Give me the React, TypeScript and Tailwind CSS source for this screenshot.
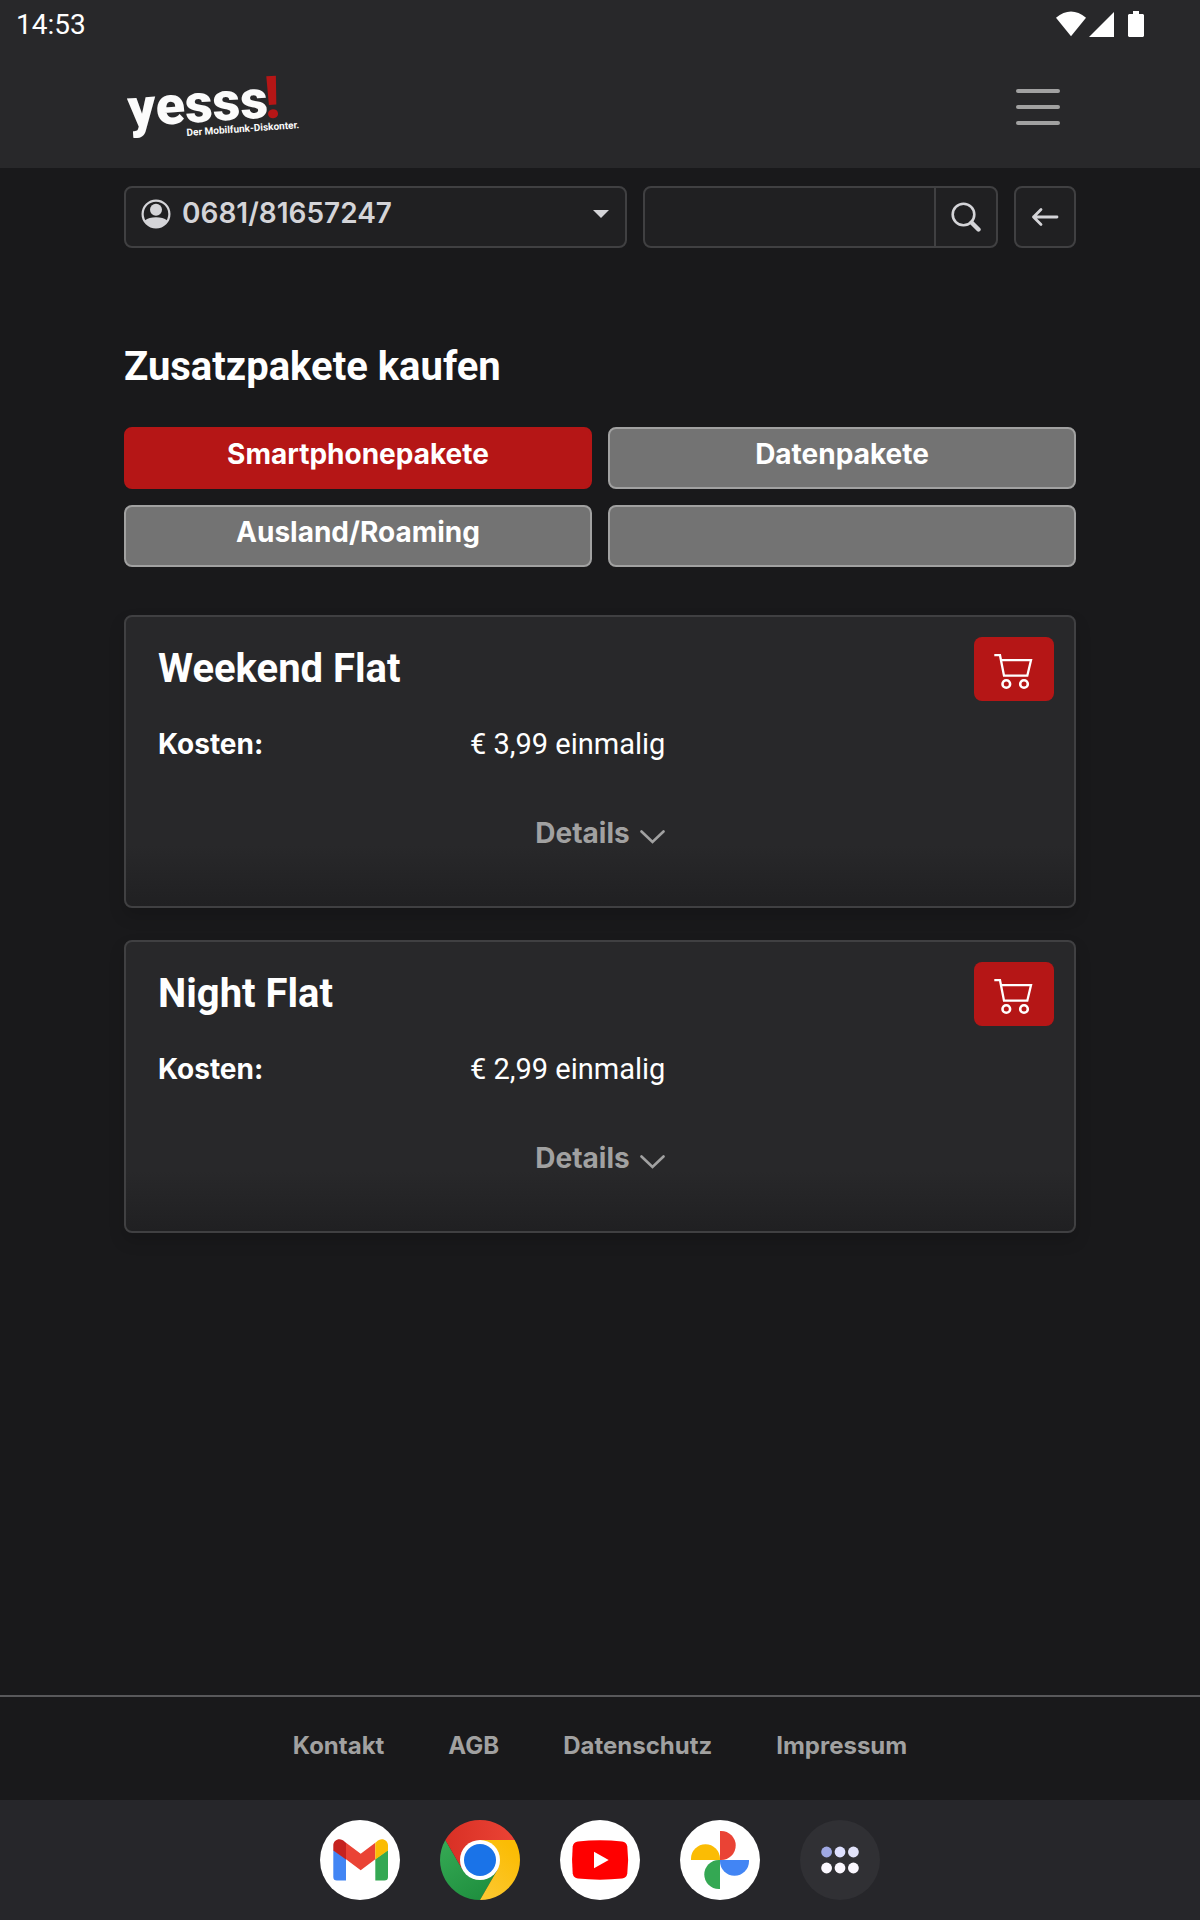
import clsx from "clsx";
import { useState } from "react";

type Package = { name: string; price: string };

const TABS = ["Smartphonepakete", "Datenpakete", "Ausland/Roaming", ""];

const PACKAGES: Package[] = [
  { name: "Weekend Flat", price: "€ 3,99 einmalig" },
  { name: "Night Flat", price: "€ 2,99 einmalig" },
];

const FOOTER_LINKS = ["Kontakt", "AGB", "Datenschutz", "Impressum"];

export default function App() {
  const [tab, setTab] = useState(0);

  return (
    <div className="min-h-screen flex flex-col bg-[#19191b] text-white font-['Inter',sans-serif]">
      <div className="bg-[#28282a]">
        <StatusBar />
        <header className="h-30 px-31 pb-0.5 flex items-center justify-between">
          <a href="#" aria-label="yesss!">
            <Logo />
          </a>
          <button type="button" aria-label="Menü" className="mr-4 flex flex-col gap-3">
            <span className="h-1 w-11 rounded-full bg-[#a1a1a1]" />
            <span className="h-1 w-11 rounded-full bg-[#a1a1a1]" />
            <span className="h-1 w-11 rounded-full bg-[#a1a1a1]" />
          </button>
        </header>
      </div>

      <main className="flex-1 px-31 pt-[18px]">
        <Toolbar />

        <h1 className="mt-[97px] mb-[38px] font-['Roboto',sans-serif] text-[40px] leading-11 font-bold">
          Zusatzpakete kaufen
        </h1>

        <div className="grid grid-cols-2 gap-4">
          {TABS.map((label, i) => (
            <button
              key={i}
              type="button"
              aria-label={label || "Weitere"}
              onClick={() => setTab(i)}
              className={clsx(
                "min-h-[62px] rounded-lg border-2 pt-[7px] pb-[15px] text-[28px] leading-9 font-bold",
                i === tab ? "border-[#b51616] bg-[#b51616]" : "border-[#a1a1a1] bg-[#737373]",
              )}
            >
              {label}
            </button>
          ))}
        </div>

        <div className="mt-12 space-y-8">
          {PACKAGES.map((p) => <PackageCard key={p.name} {...p} />)}
        </div>
      </main>

      <footer className="border-t-2 border-[#58585b] pt-[33px] pb-[38px]">
        <nav className="flex justify-center gap-16 text-2xl font-bold text-[#a1a1a1]">
          {FOOTER_LINKS.map((label) => <a key={label} href="#">{label}</a>)}
        </nav>
      </footer>

      <Dock />
    </div>
  );
}

function StatusBar() {
  return (
    <div className="h-12 pl-4 pr-14 flex items-center justify-between font-['Roboto',sans-serif] text-[28px]">
      <span className="pt-0.5">14:53</span>
      <svg width="88" height="26" viewBox="0 0 88 26" fill="#fff" aria-hidden="true">
        <path d="M0 6.8Q15-6 30 6.8L15 25.2z" />
        <path d="M58 1V26H33z" />
        <path d="M77 0h6v3h4l1 1v21l-1 1H73l-1-1V4l1-1h4z" />
      </svg>
    </div>
  );
}

function Logo() {
  return (
    <svg width="180" height="68" viewBox="124 73 180 68" className="overflow-visible font-['Roboto',sans-serif]">
      <g transform="rotate(-4 129 126)" fill="#fbfbfb">
        <text x="129" y="127" fontSize="54" fontWeight="900">yesss</text>
        <text x="186" y="140" fontSize="10" fontWeight="700">Der Mobilfunk-Diskonter.</text>
      </g>
      <text x="265" y="118" fontSize="59" fontWeight="800" fill="#b51616" transform="rotate(-3 270 118)">!</text>
    </svg>
  );
}

function Toolbar() {
  return (
    <div className="grid grid-cols-[minmax(0,1.415fr)_minmax(0,1fr)_62px] gap-4 text-[#d4d4d8]">
      <div className="relative">
        <select
          aria-label="Rufnummer"
          className="w-full h-[62px] appearance-none rounded-lg border-2 border-[#404042] bg-[#202022] pl-14 pr-10 pt-[7px] pb-[15px] text-[28px] leading-9 font-semibold"
        >
          <option>0681/81657247</option>
        </select>
        <svg width="30" height="30" viewBox="0 0 30 30" className="pointer-events-none absolute left-[17px] top-[13px]" aria-hidden="true">
          <circle cx="15" cy="15" r="13.4" fill="none" stroke="currentColor" strokeWidth="2.2" />
          <circle cx="15" cy="10.8" r="6" fill="currentColor" />
          <path d="M3.8 21.5Q8 18.2 15 18.2T26.2 21.5Q22.5 28.5 15 28.5T3.8 21.5z" fill="currentColor" />
        </svg>
        <svg width="16" height="8" viewBox="0 0 16 8" className="pointer-events-none absolute right-[18px] top-6" aria-hidden="true">
          <path d="M0 0H16L8 8z" fill="currentColor" />
        </svg>
      </div>

      <form className="flex h-[62px] rounded-lg border-2 border-[#404042] bg-[#202022]">
        <input type="text" aria-label="Suche" className="min-w-0 flex-1 px-4 text-[28px] outline-none" />
        <button type="button" aria-label="Suchen" className="w-[62px] border-l-2 border-[#404042] flex items-center justify-center">
          <svg width="30" height="30" viewBox="0 0 30 30" fill="none" stroke="currentColor" strokeLinecap="round">
            <circle cx="12.5" cy="12.5" r="10.8" strokeWidth="2.6" />
            <path d="M20.5 20.5L27.5 27.5" strokeWidth="4.4" />
          </svg>
        </button>
      </form>

      <button type="button" aria-label="Zurück" className="h-[62px] rounded-lg border-2 border-[#404042] bg-[#202022] flex items-center justify-center">
        <svg width="28" height="20" viewBox="0 0 28 20" fill="none" stroke="currentColor" strokeWidth="2.8" strokeLinecap="round" strokeLinejoin="round">
          <path d="M26 10H2.5M10 2.5L2.5 10L10 17.5" />
        </svg>
      </button>
    </div>
  );
}

function PackageCard({ name, price }: Package) {
  return (
    <section className="rounded-lg border-2 border-[#404042] bg-[linear-gradient(to_top,#202022,#28282a_60px)] p-5 pb-[55px] shadow-[0_8px_16px_rgba(0,0,0,0.15)]">
      <div className="pl-3 flex items-center justify-between">
        <h2 className="font-['Roboto',sans-serif] text-[40px] leading-11 font-bold">{name}</h2>
        <button type="button" aria-label={`${name} kaufen`} className="h-16 w-20 rounded-lg bg-[#b51616] flex items-center justify-center">
          <svg width="40" height="44" viewBox="20 10 40 44" fill="none" stroke="#fff" strokeWidth="2.3">
            <path d="M20.3 18.2H26L30 38.7H53.3L57 23.2H27.2" />
            <circle cx="32.3" cy="47" r="3.8" strokeWidth="2.6" />
            <circle cx="50" cy="47" r="3.8" strokeWidth="2.6" />
          </svg>
        </button>
      </div>

      <dl className="mt-[25px] pl-3 flex leading-9">
        <dt className="w-78 text-[28px] font-bold">Kosten:</dt>
        <dd className="font-['Roboto',sans-serif] text-[29px]">{price}</dd>
      </dl>

      <button type="button" className="mx-auto mt-[53px] flex items-center gap-2.5 text-[28px] leading-9 font-bold text-[#a1a1a1]">
        Details
        <svg width="25" height="14" viewBox="0 0 25 14" className="mt-2" fill="none" stroke="currentColor" strokeWidth="2.6" strokeLinecap="round" aria-hidden="true">
          <path d="M1.5 1.5L12.5 12L23.5 1.5" />
        </svg>
      </button>
    </section>
  );
}

function Dock() {
  return (
    <nav className="h-30 bg-[#26262a] flex items-center justify-center gap-10">
      <button type="button" aria-label="Gmail" className="size-20">
        <svg viewBox="0 0 80 80">
          <circle cx="40" cy="40" r="40" fill="#fff" />
          <path d="M13.3 30L26 38.5V60.6H17Q13.3 60.6 13.3 57z" fill="#4285f4" />
          <path d="M68 30L55.3 39V60.6H64.3Q68 60.6 68 57z" fill="#34a853" />
          <path d="M26 22.8L40.7 33.8L55.3 22.8V39.3L40.7 50.2L26 39.3z" fill="#ea4335" />
          <path d="M13.3 30.5V25.5C13.3 19.5 20.5 17 25 21.9L26 22.8V39.5z" fill="#c5221f" />
          <path d="M68 30.5V25.5C68 19.5 60.8 17 56.3 21.9L55.3 22.8V39.5z" fill="#fbbc04" />
        </svg>
      </button>
      <button type="button" aria-label="Chrome" className="size-20">
        <svg viewBox="0 0 80 80">
          <defs>
            <linearGradient id="red" x1="0" x2="1"><stop stopColor="#d93025" /><stop offset="1" stopColor="#ea4335" /></linearGradient>
            <linearGradient id="yellow" x1="0" y1="1" x2="0.6" y2="0"><stop stopColor="#fcc934" /><stop offset="1" stopColor="#fbbc04" /></linearGradient>
            <linearGradient id="green" x1="0.8" y1="1" x2="0.2" y2="0"><stop stopColor="#1e8e3e" /><stop offset="1" stopColor="#34a853" /></linearGradient>
          </defs>
          <path d="M5.36 20A40 40 0 0 0 40 80L57.32 50L40 40L22.68 50z" fill="url(#green)" />
          <path d="M74.64 20A40 40 0 0 1 40 80L57.32 50L40 40V20z" fill="url(#yellow)" />
          <path d="M5.36 20A40 40 0 0 1 74.64 20H40V40L22.68 50z" fill="url(#red)" />
          <circle cx="40" cy="40" r="20" fill="#fff" />
          <circle cx="40" cy="40" r="16" fill="#1a73e8" />
        </svg>
      </button>
      <button type="button" aria-label="YouTube" className="size-20">
        <svg viewBox="0 0 80 80">
          <circle cx="40" cy="40" r="40" fill="#fff" />
          <path d="M18 21.5Q40 19.2 62 21.5Q66.5 22 67.3 26.5Q69 40 67.3 53.5Q66.5 58 62 58.5Q40 60.8 18 58.5Q13.5 58 12.7 53.5Q11.4 40 12.7 26.5Q13.5 22 18 21.5z" fill="#f00" />
          <path d="M34 31.7L48.7 40L34 48.3z" fill="#fff" />
        </svg>
      </button>
      <button type="button" aria-label="Fotos" className="size-20">
        <svg viewBox="0 0 80 80">
          <circle cx="40" cy="40" r="40" fill="#fff" />
          <path d="M40 11H41.2A14.5 14.5 0 0 1 41.2 40H40z" fill="#ea4335" />
          <path d="M40 11H41.2A14.5 14.5 0 0 1 41.2 40H40z" fill="#4285f4" transform="rotate(90 40 40)" />
          <path d="M40 11H41.2A14.5 14.5 0 0 1 41.2 40H40z" fill="#34a853" transform="rotate(180 40 40)" />
          <path d="M40 11H41.2A14.5 14.5 0 0 1 41.2 40H40z" fill="#fbbc04" transform="rotate(270 40 40)" />
        </svg>
      </button>
      <button type="button" aria-label="Alle Apps" className="size-20">
        <svg viewBox="0 0 80 80">
          <circle cx="40" cy="40" r="40" fill="#303034" />
          <circle cx="26.6" cy="32" r="5.4" fill="#9fa8e3" />
          <circle cx="40" cy="32" r="5.4" fill="#dee0ff" />
          <circle cx="53.4" cy="32" r="5.4" fill="#e1e2f9" />
          <circle cx="26.6" cy="48" r="5.4" fill="#fbf8ff" />
          <circle cx="40" cy="48" r="5.4" fill="#fbf8ff" />
          <circle cx="53.4" cy="48" r="5.4" fill="#fbf8ff" />
        </svg>
      </button>
    </nav>
  );
}
